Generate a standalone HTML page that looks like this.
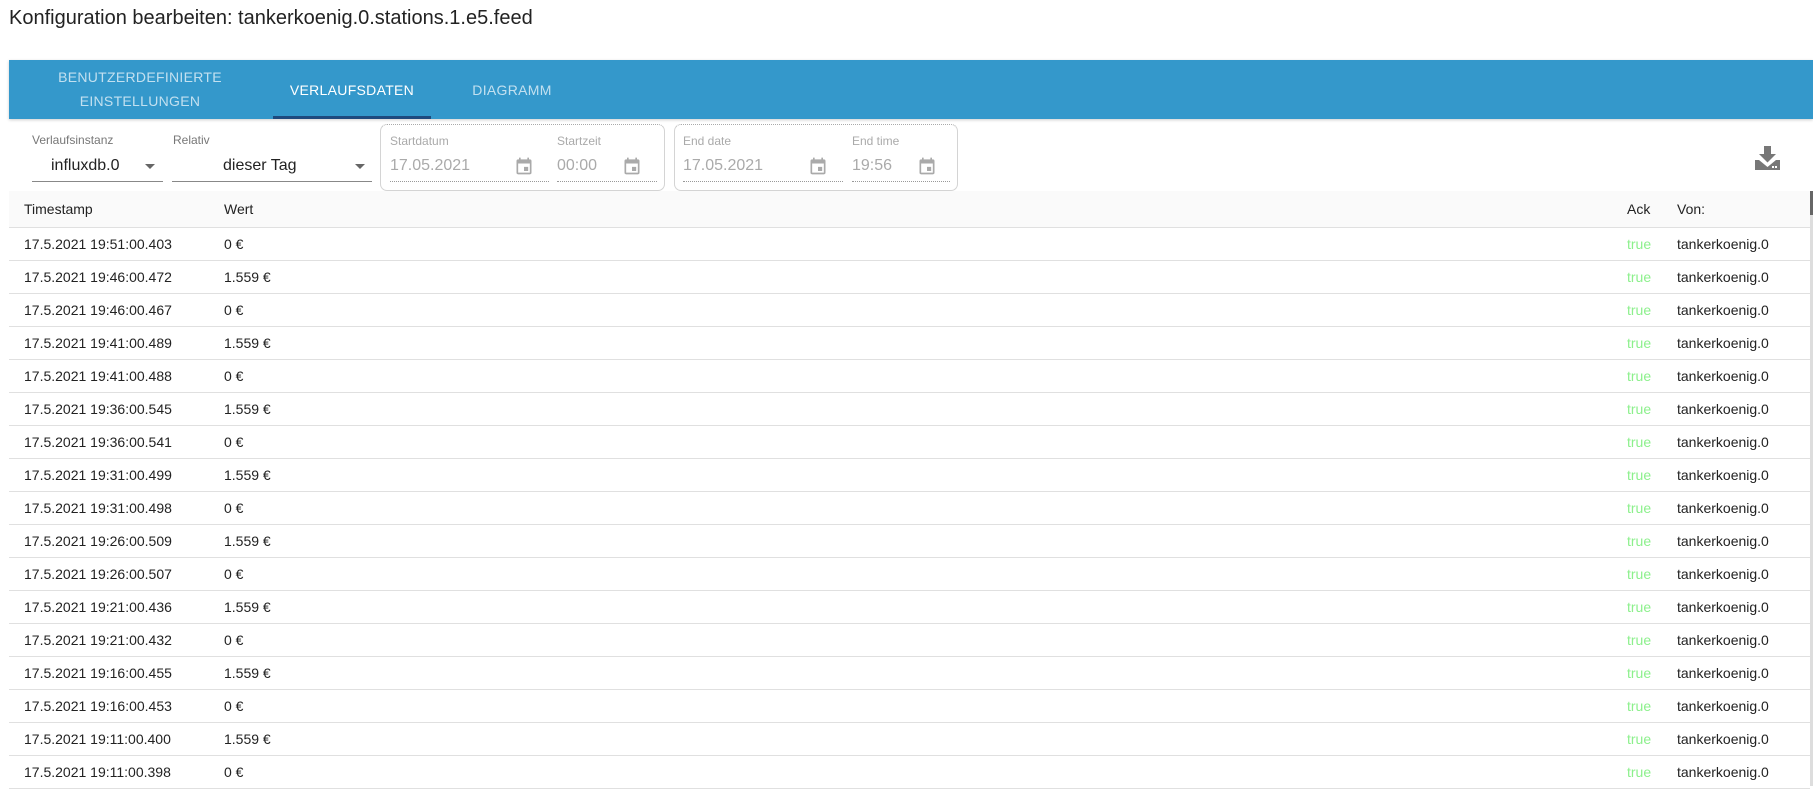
<!DOCTYPE html>
<html><head><meta charset="utf-8"><style>
*{box-sizing:border-box;margin:0;padding:0}
body{width:1813px;height:786px;overflow:hidden;background:#fff;font-family:"Liberation Sans",sans-serif;color:#222;position:relative}
.a{position:absolute;white-space:nowrap}
.title{left:9px;top:7px;font-size:20px;color:#222}
.bar{left:9px;top:60px;width:1804px;height:59px;background:#3498cb;box-shadow:0 1px 3px rgba(0,0,0,.2)}
.tab{font-size:14px;font-weight:normal;color:rgba(255,255,255,.7);text-align:center;letter-spacing:.3px;line-height:24px}
.lbl{font-size:12px;color:#777}
.val{font-size:16px;color:#222}
.gval{font-size:16px;color:#aaa}
.ul{height:1px;background:#888}
.dul{height:0;border-bottom:1px dotted #999}
.box{border:1px solid #d4d4d4;border-top:1px dotted #aaa;border-radius:7px}
.arrow{width:0;height:0;border-left:5px solid transparent;border-right:5px solid transparent;border-top:5px solid #666}
.hdr{left:9px;top:191px;width:1801px;height:37px;background:#fafafa;border-bottom:1px solid #e0e0e0}
.row{left:9px;width:1801px;height:33px;border-bottom:1px solid #e0e0e0;font-size:14px}
.row span,.hdr span{position:absolute;top:0;line-height:32px}
.hdr span{line-height:36px;font-size:14px}
.t{color:#8cf08c}
</style></head><body>
<div class="a title">Konfiguration bearbeiten: tankerkoenig.0.stations.1.e5.feed</div>
<div class="a bar"></div>
<div class="a tab" style="left:40px;top:65px;width:200px">BENUTZERDEFINIERTE<br>EINSTELLUNGEN</div>
<div class="a tab" style="left:273px;top:78px;width:158px;color:#fff">VERLAUFSDATEN</div>
<div class="a" style="left:273px;top:116px;width:158px;height:3px;background:#1d4a7e"></div>
<div class="a tab" style="left:452px;top:78px;width:120px">DIAGRAMM</div>

<div class="a lbl" style="left:32px;top:133px">Verlaufsinstanz</div>
<div class="a val" style="left:51px;top:157px">influxdb.0</div>
<div class="a arrow" style="left:145px;top:164px"></div>
<div class="a ul" style="left:32px;top:181px;width:131px"></div>
<div class="a lbl" style="left:173px;top:133px">Relativ</div>
<div class="a val" style="left:223px;top:157px">dieser Tag</div>
<div class="a arrow" style="left:355px;top:164px"></div>
<div class="a ul" style="left:172px;top:181px;width:200px"></div>

<div class="a box" style="left:380px;top:124px;width:285px;height:67px"></div>
<div class="a box" style="left:674px;top:124px;width:284px;height:67px"></div>
<div class="a lbl" style="left:390px;top:134px;color:#aaa">Startdatum</div>
<div class="a gval" style="left:390px;top:157px">17.05.2021</div>
<div class="a dul" style="left:390px;top:181px;width:159px"></div>
<div class="a lbl" style="left:557px;top:134px;color:#aaa">Startzeit</div>
<div class="a gval" style="left:557px;top:157px">00:00</div>
<div class="a dul" style="left:557px;top:181px;width:100px"></div>
<div class="a lbl" style="left:683px;top:134px;color:#aaa">End date</div>
<div class="a gval" style="left:683px;top:157px">17.05.2021</div>
<div class="a dul" style="left:683px;top:181px;width:160px"></div>
<div class="a lbl" style="left:852px;top:134px;color:#aaa">End time</div>
<div class="a gval" style="left:852px;top:157px">19:56</div>
<div class="a dul" style="left:852px;top:181px;width:98px"></div>
<svg class="a" style="left:514px;top:156px" width="20" height="20" viewBox="0 0 24 24"><path fill="#aaa" d="M19 4h-1V2h-2v2H8V2H6v2H5a2 2 0 0 0-2 2v14a2 2 0 0 0 2 2h14a2 2 0 0 0 2-2V6a2 2 0 0 0-2-2zm0 16H5V9h14zM12 13h5v5h-5z"/></svg>
<svg class="a" style="left:622px;top:156px" width="20" height="20" viewBox="0 0 24 24"><path fill="#aaa" d="M19 4h-1V2h-2v2H8V2H6v2H5a2 2 0 0 0-2 2v14a2 2 0 0 0 2 2h14a2 2 0 0 0 2-2V6a2 2 0 0 0-2-2zm0 16H5V9h14zM12 13h5v5h-5z"/></svg>
<svg class="a" style="left:808px;top:156px" width="20" height="20" viewBox="0 0 24 24"><path fill="#aaa" d="M19 4h-1V2h-2v2H8V2H6v2H5a2 2 0 0 0-2 2v14a2 2 0 0 0 2 2h14a2 2 0 0 0 2-2V6a2 2 0 0 0-2-2zm0 16H5V9h14zM12 13h5v5h-5z"/></svg>
<svg class="a" style="left:917px;top:156px" width="20" height="20" viewBox="0 0 24 24"><path fill="#aaa" d="M19 4h-1V2h-2v2H8V2H6v2H5a2 2 0 0 0-2 2v14a2 2 0 0 0 2 2h14a2 2 0 0 0 2-2V6a2 2 0 0 0-2-2zm0 16H5V9h14zM12 13h5v5h-5z"/></svg>
<svg class="a" style="left:1755px;top:146px" width="25" height="25" viewBox="0 0 25 25"><path fill="#777" d="M9 0h7v8h5l-8.5 8.5L4 8h5z"/><path fill="#777" d="M0 14h4l8.5 7 8.5-7h4v10H0z"/><rect x="17" y="20" width="2" height="2" fill="#fff"/><rect x="20" y="20" width="2" height="2" fill="#fff"/></svg>

<div class="a hdr"><span style="left:15px">Timestamp</span><span style="left:215px">Wert</span><span style="left:1618px">Ack</span><span style="left:1668px">Von:</span></div>
<div class="a" style="left:1810px;top:191px;width:3px;height:595px;background:#ddd"></div>
<div class="a" style="left:1810px;top:191px;width:3px;height:24px;background:#666"></div>
<div id="rows"></div>
<script>
var d=[["19:51:00.403","0"],["19:46:00.472","1.559"],["19:46:00.467","0"],["19:41:00.489","1.559"],["19:41:00.488","0"],["19:36:00.545","1.559"],["19:36:00.541","0"],["19:31:00.499","1.559"],["19:31:00.498","0"],["19:26:00.509","1.559"],["19:26:00.507","0"],["19:21:00.436","1.559"],["19:21:00.432","0"],["19:16:00.455","1.559"],["19:16:00.453","0"],["19:11:00.400","1.559"],["19:11:00.398","0"]];
var h="";d.forEach(function(r,i){h+='<div class="a row" style="top:'+(228+33*i)+'px"><span style="left:15px">17.5.2021 '+r[0]+'</span><span style="left:215px">'+r[1]+' €</span><span class="t" style="left:1618px">true</span><span style="left:1668px">tankerkoenig.0</span></div>';});
document.getElementById("rows").innerHTML=h;
</script>
</body></html>
